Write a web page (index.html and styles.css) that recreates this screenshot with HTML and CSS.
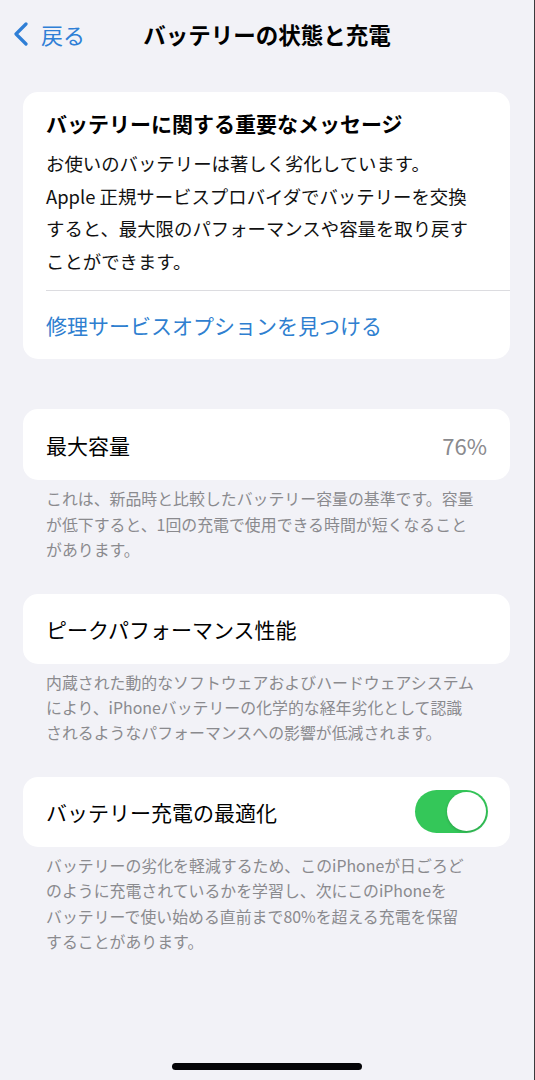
FILE: index.html
```html
<!DOCTYPE html>
<html lang="ja">
<head>
<meta charset="utf-8">
<title>バッテリーの状態と充電</title>
<link rel="stylesheet" href="styles.css">
</head>
<body>
<div class="screen">
  <header class="nav">
    <div class="back">
      <svg class="chev" width="18" height="24" viewBox="0 0 18 24"><path d="M14 2 L4 12 L14 22" fill="none" stroke="#2f7fd6" stroke-width="3.2" stroke-linecap="round" stroke-linejoin="round"/></svg>
      <span class="back-label">戻る</span>
    </div>
    <h1 class="nav-title">バッテリーの状態と充電</h1>
  </header>

  <section class="card msg">
    <div class="msg-body">
      <h2 class="msg-title">バッテリーに関する重要なメッセージ</h2>
      <p class="msg-text">お使いのバッテリーは著しく劣化しています。<br>Apple 正規サービスプロバイダでバッテリーを交換<br>すると、最大限のパフォーマンスや容量を取り戻す<br>ことができます。</p>
    </div>
    <div class="msg-link">修理サービスオプションを見つける</div>
  </section>

  <section class="card row cap">
    <span class="row-label">最大容量</span>
    <span class="row-value">76%</span>
  </section>
  <p class="foot">これは、新品時と比較したバッテリー容量の基準です。容量<br>が低下すると、1回の充電で使用できる時間が短くなること<br>があります。</p>

  <section class="card row peak">
    <span class="row-label">ピークパフォーマンス性能</span>
  </section>
  <p class="foot">内蔵された動的なソフトウェアおよびハードウェアシステム<br>により、iPhoneバッテリーの化学的な経年劣化として認識<br>されるようなパフォーマンスへの影響が低減されます。</p>

  <section class="card row opt">
    <span class="row-label">バッテリー充電の最適化</span>
    <span class="toggle"><span class="knob"></span></span>
  </section>
  <p class="foot">バッテリーの劣化を軽減するため、このiPhoneが日ごろど<br>のように充電されているかを学習し、次にこのiPhoneを<br>バッテリーで使い始める直前まで80%を超える充電を保留<br>することがあります。</p>

  <div class="home-wrap"><div class="home"></div></div>
</div>
</body>
</html>
```

FILE: styles.css
```css
* { box-sizing: border-box; margin: 0; padding: 0; }
html, body { width: 535px; height: 1080px; overflow: hidden; }
body {
  background: #f2f2f7;
  font-family: "Noto Sans CJK JP", "Noto Sans", sans-serif;
  color: #000;
}
.screen {
  height: 1080px;
  display: flex;
  flex-direction: column;
  border-right: 1px solid #3a3a3c;
}
.nav {
  height: 72px;
  display: flex;
  align-items: center;
  padding-bottom: 4px;
  position: relative;
}
.back {
  display: flex;
  align-items: center;
  gap: 11px;
  padding-left: 12px;
  color: #2f7fd6;
}
.back-label { font-size: 22px; line-height: 30px; }
.nav-title {
  position: absolute;
  left: 0; right: 0;
  text-align: center;
  font-size: 22.5px;
  font-weight: 700;
  line-height: 30px;
  pointer-events: none;
}
.card {
  background: #fff;
  border-radius: 15px;
  margin: 0 24px 0 23px;
}
.msg { margin-top: 20px; }
.msg-body { padding: 16px 23px 13px 23px; }
.msg-title {
  font-size: 21px;
  font-weight: 700;
  line-height: 30px;
  margin-bottom: 9px;
}
.msg-text {
  font-size: 18.4px;
  line-height: 32.6px;
  color: #111;
}
.msg-link {
  margin-left: 23px;
  border-top: 1px solid #dcdce0;
  height: 69px;
  display: flex;
  align-items: center;
  font-size: 21px;
  color: #2f7fd0;
}
.row {
  height: 70px;
  display: flex;
  align-items: center;
  justify-content: space-between;
  padding: 0 23px;
}
.row-label { font-size: 21px; }
.row-value { font-size: 22px; color: #8a8a8e; }
.cap { margin-top: 50px; height: 71px; }
.peak { margin-top: 31px; }
.opt { margin-top: 31px; }
.foot {
  font-size: 15.9px;
  line-height: 25.4px;
  color: #8a8a8e;
  padding: 6px 23px 0 46px;
}
.toggle {
  width: 73px;
  height: 43px;
  border-radius: 22px;
  background: #34c759;
  display: flex;
  align-items: center;
  justify-content: flex-end;
  padding: 2px;
  margin-right: -1px;
}
.knob {
  width: 39px;
  height: 39px;
  border-radius: 50%;
  background: #fff;
  box-shadow: 0 1px 3px rgba(0,0,0,0.2);
}
.home-wrap {
  margin-top: auto;
  height: 17px;
  display: flex;
  justify-content: center;
}
.home {
  width: 190px;
  height: 7px;
  border-radius: 4px;
  background: #050508;
}
```
